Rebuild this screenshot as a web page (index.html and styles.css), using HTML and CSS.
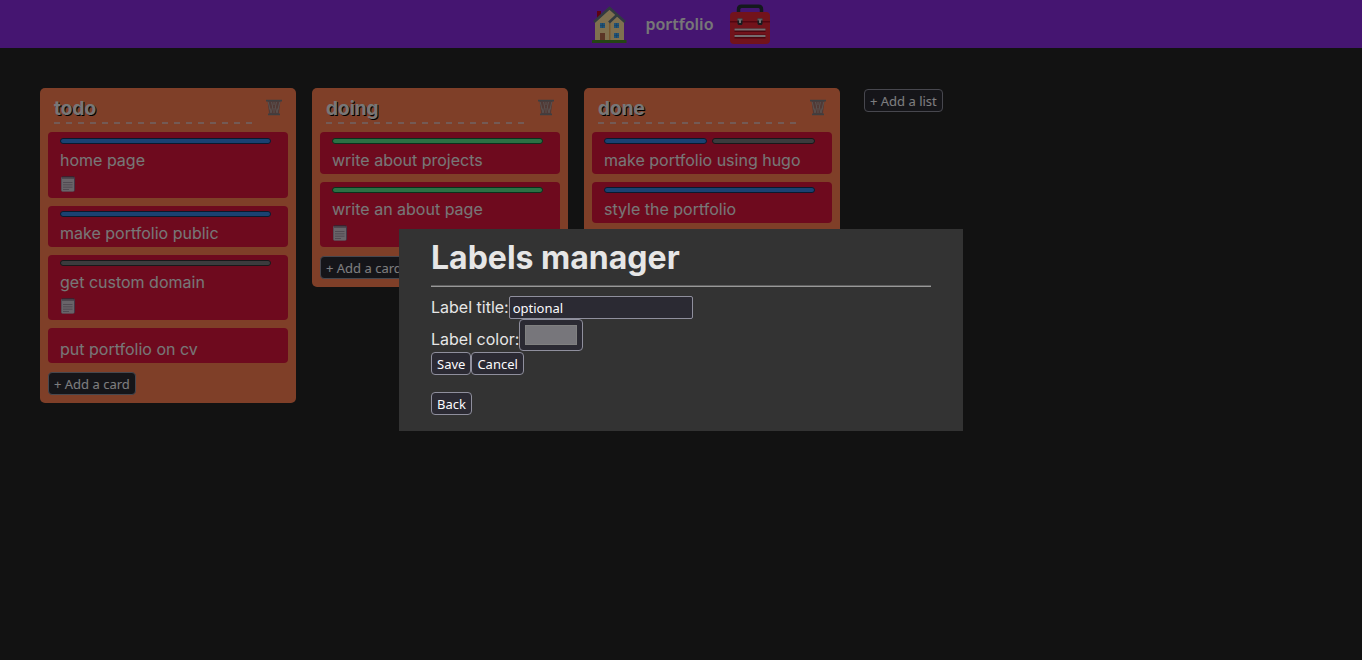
FILE: index.html
```html
<!DOCTYPE html>
<html lang="en">
<head>
<meta charset="utf-8">
<meta name="viewport" content="width=device-width, initial-scale=1">
<title>portfolio</title>
<link rel="stylesheet" href="styles.css">
</head>
<body>
<svg class="sprite" aria-hidden="true">
  <symbol id="trash" viewBox="0 0 16 17">
    <path d="M1.500 2 3.200 15.500h9.600L14.500 2z" fill="#a3736a"/>
    <path d="M2.200 3 5 14M13.800 3 11 14M5.500 3l1.200 5-1.700 6M10.500 3 9.300 8l1.700 6M8 3v3M8 9v5M3.500 9l1 2M12.500 9l-1 2" fill="none" stroke="#b3a3a0" stroke-width="1"/>
    <path d="M0 .7h16v1.800H0zM2 14.500h12v1.700H2z" fill="#7d7d81"/>
  </symbol>
  <symbol id="note" viewBox="0 0 16 17">
    <rect x="1" y="1.500" width="14" height="15" rx="1.500" fill="#8b6f8e"/>
    <rect x="1.500" y="2" width="12.500" height="14.500" rx="1" fill="#d3c8d2"/>
    <path d="M3 7.500h9.500M3 9.800h9.500M3 12.200h9.500M3 14.500h6" stroke="#968899" stroke-width=".8"/>
    <path d="M3 1v2.800M5 1v2.800M7 1v2.800M9 1v2.800M11 1v2.800M13 1v2.800" stroke="#4b3b4e"/>
  </symbol>
</svg>
<header class="topbar">
  <a class="topbar-link" href="#" aria-label="Home">
    <svg class="house" viewBox="0 0 36 38">
      <path d="M5 6h4v9H5z" fill="#bd0524"/>
      <path d="M3 17 17.500 4 32 17v19H3z" fill="#ffe0a0"/>
      <path d="M17 18h1.500v18H17z" fill="#eeb060"/>
      <path d="m2 17 15.500-14L33 17" fill="none" stroke="#627482" stroke-width="2.600"/>
      <path d="m17 17.500 8-7.500" stroke="#627482" stroke-width="2.600"/>
      <path d="M0 35h34.500v3H0z" fill="#4b8a28"/>
      <path d="M8 28h5v7H8z" fill="#b66b4d"/>
      <path d="M8 18h5v5H8zM22 18h5v5h-5zM22 28h5v5h-5z" fill="#42a5ed"/>
      <path d="M8 20.500h5M22 20.500h5M22 30.500h5M10.500 18v5M24.500 18v5M24.500 28v5" stroke="#3180ba" stroke-width=".6"/>
    </svg>
  </a>
  <span class="topbar-title">portfolio</span>
  <button class="tool-button" type="button" aria-label="Tools">
    <svg class="toolbox" viewBox="0 0 40 40">
      <path d="M8.500 9V5.500Q8.500 2.200 11.500 2.200h17q3 0 3 3.300V9" fill="none" stroke="#26323a" stroke-width="3.500"/>
      <rect y="8" width="40" height="32" rx="4" fill="#e52637"/>
      <path d="M0 17h40v1.500H0z" fill="#a60d22"/>
      <g id="latch"><path d="M7.500 14.500h5V20l-1 1h-3l-1-1z" fill="#303840"/><path d="M7.500 14.500h5v2h-5z" fill="#aab7bd"/><path d="M9 15.500h2v3.500H9z" fill="#d8d8da"/></g>
      <use href="#latch" x="20"/>
      <path d="M4.500 26h31M4.500 32.500h31" stroke="#960e20" stroke-width="4"/>
      <path d="M4.500 25.500h31M4.500 32h31" stroke="#e8dade" stroke-width="2"/>
    </svg>
  </button>
</header>
<main class="board">
  <section class="list">
    <header class="list-head"><h2 class="list-title">todo</h2><button class="trash-button" type="button" aria-label="Delete todo"><svg><use href="#trash"/></svg></button></header>
    <div class="cards">
      <article class="card"><div class="labels"><span class="label blue"></span></div><p>home page</p><svg class="note"><use href="#note"/></svg></article>
      <article class="card"><div class="labels"><span class="label blue"></span></div><p>make portfolio public</p></article>
      <article class="card"><div class="labels"><span class="label gray"></span></div><p>get custom domain</p><svg class="note"><use href="#note"/></svg></article>
      <article class="card"><p>put portfolio on cv</p></article>
    </div>
    <button class="button add-card" type="button">+ Add a card</button>
  </section>
  <section class="list">
    <header class="list-head"><h2 class="list-title">doing</h2><button class="trash-button" type="button" aria-label="Delete doing"><svg><use href="#trash"/></svg></button></header>
    <div class="cards">
      <article class="card"><div class="labels"><span class="label green"></span></div><p>write about projects</p></article>
      <article class="card"><div class="labels"><span class="label green"></span></div><p>write an about page</p><svg class="note"><use href="#note"/></svg></article>
    </div>
    <button class="button add-card" type="button">+ Add a card</button>
  </section>
  <section class="list">
    <header class="list-head"><h2 class="list-title">done</h2><button class="trash-button" type="button" aria-label="Delete done"><svg><use href="#trash"/></svg></button></header>
    <div class="cards">
      <article class="card"><div class="labels"><span class="label blue"></span><span class="label gray"></span></div><p>make portfolio using hugo</p></article>
      <article class="card"><div class="labels"><span class="label blue"></span></div><p>style the portfolio</p></article>
    </div>
    <button class="button add-card" type="button">+ Add a card</button>
  </section>
  <button class="button add-list" type="button">+ Add a list</button>
</main>
<div class="overlay">
  <form class="modal" role="dialog" aria-labelledby="modal-title">
    <h1 id="modal-title">Labels manager</h1>
    <hr>
    <div class="field"><label for="label-title">Label title:</label><input class="text-input" id="label-title" type="text" placeholder="optional"></div>
    <div class="field"><label class="color-caption" for="label-color">Label color:</label><input class="color-input" id="label-color" type="color" value="#77767b"></div>
    <div class="actions"><button class="button" type="button">Save</button><button class="button" type="button">Cancel</button></div>
    <button class="button back" type="button">Back</button>
  </form>
</div>
</body>
</html>
```
FILE: styles.css
```css
* { box-sizing: border-box; }
body {
  margin: 0;
  min-height: 100vh;
  background: #242424;
  color: #eee;
  font: 16px/24px Inter, sans-serif;
}
h1, h2, p { margin: 0; }
svg { display: block; }
.sprite { display: none; }
button { cursor: pointer; }

.topbar {
  display: flex;
  justify-content: center;
  align-items: center;
  gap: 16px;
  height: 48px;
  background: blueviolet;
}
.topbar-link { padding-right: 1px; }
.house { width: 36px; height: 38px; }
.topbar-title { font: 600 16px/24px "Noto Sans", sans-serif; }
.tool-button { padding: 0; border: 0; background: none; }
.toolbox { width: 40px; height: 40px; }

.board { display: flex; align-items: flex-start; gap: 16px; padding: 40px; }
.list {
  flex: none;
  width: 256px;
  padding: 0 8px 8px;
  border-radius: 5px;
  background: coral;
}
.list-head {
  display: flex;
  justify-content: space-between;
  align-items: flex-start;
  height: 44px;
  padding: 4px 6px 0;
}
.list-title {
  width: 198px;
  height: 32px;
  font: bold 19px/34px Inter, sans-serif;
  text-shadow: 1px 1px 0 #000;
  background: repeating-linear-gradient(90deg, #e8b5aa 0 6px, transparent 6px 12px) bottom / 100% 2px no-repeat;
}
.trash-button { margin-top: 7px; padding: 0; border: 0; background: none; }
.trash-button svg { width: 16px; height: 17px; }
.cards { display: grid; gap: 8px; }
.card {
  padding: 5px 17px 2px 12px;
  border-radius: 4px;
  background: crimson;
  color: #eee;
}
.card:first-child { padding-top: 6px; }
.card p { margin-top: 4px; }
.labels { display: flex; gap: 5px; }
.label { flex: 1; height: 6px; border: 1px solid; border-radius: 3px; }
.blue { background: #3584e4; border-color: #12355f; }
.gray { background: #77767b; border-color: #303034; }
.green { background: #57e389; border-color: #126438; }
.note { width: 16px; height: 17px; margin: 3px 0 4px; }

.button, .text-input, .color-input {
  height: 23px;
  border: 1px solid #8f8f9d;
  border-radius: 4px;
  background: #2b2a33;
  color: #fbfbfe;
  font: 13px/19px "Noto Sans", sans-serif;
}
.button { padding: 2px 5px 0; }
.add-card { display: block; margin-top: 9px; }
.add-list { margin: 1px 0 0 8px; }

.overlay {
  position: fixed;
  inset: 0;
  display: flex;
  justify-content: center;
  align-items: center;
  background: rgba(0, 0, 0, .5);
}
.modal {
  width: 564px;
  max-width: 100%;
  padding: 9px 32px 16px;
  background: #333;
  color: #e6e6e6;
}
.modal h1 { font: bold 32px/40px Inter, sans-serif; }
.modal hr { height: 2px; margin: 7px 0 8px; border: 0; border-top: 1px solid #606060; background: #999; }
.field { display: flex; align-items: flex-start; }
.text-input { width: 184px; margin: 1px 0 0; padding: 1px 3px; border-radius: 2px; }
.text-input::placeholder { color: #fbfbfe; }
.color-caption { padding-top: 8px; }
.color-input { width: 64px; height: 32px; padding: 5px; }
.color-input::-webkit-color-swatch-wrapper { padding: 0; }
.color-input::-webkit-color-swatch { border: 1px solid #808080; border-radius: 0; }
.actions { display: flex; margin: 1px 0 17px; }
.back { display: block; }
```
